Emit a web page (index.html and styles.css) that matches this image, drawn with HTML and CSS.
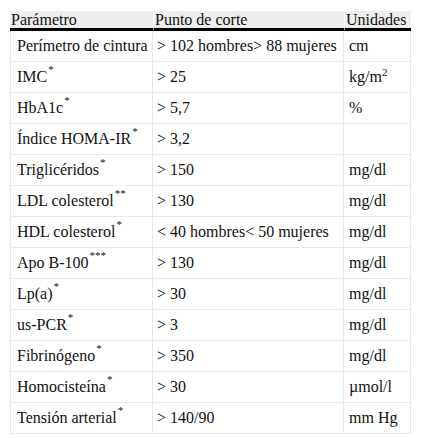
FILE: index.html
```html
<!DOCTYPE html>
<html lang="es">
<head>
<meta charset="utf-8">
<link rel="stylesheet" href="styles.css">
</head>
<body>
<table class="tbl">
  <colgroup>
    <col class="c1"><col class="c2"><col class="c3">
  </colgroup>
  <thead>
    <tr><th>Parámetro</th><th>Punto de corte</th><th>Unidades</th></tr>
  </thead>
  <tbody>
    <tr><td>Perímetro de cintura</td><td>&gt; 102 hombres&gt; 88 mujeres</td><td>cm</td></tr>
    <tr><td>IMC<sup class="ast">*</sup></td><td>&gt; 25</td><td>kg/m<sup class="pow">2</sup></td></tr>
    <tr><td>HbA1c<sup class="ast">*</sup></td><td>&gt; 5,7</td><td>%</td></tr>
    <tr><td>Índice HOMA-IR<sup class="ast">*</sup></td><td>&gt; 3,2</td><td></td></tr>
    <tr><td>Triglicéridos<sup class="ast">*</sup></td><td>&gt; 150</td><td>mg/dl</td></tr>
    <tr><td>LDL colesterol<sup class="ast">**</sup></td><td>&gt; 130</td><td>mg/dl</td></tr>
    <tr><td>HDL colesterol<sup class="ast">*</sup></td><td>&lt; 40 hombres&lt; 50 mujeres</td><td>mg/dl</td></tr>
    <tr><td>Apo B-100<sup class="ast">***</sup></td><td>&gt; 130</td><td>mg/dl</td></tr>
    <tr><td>Lp(a)<sup class="ast">*</sup></td><td>&gt; 30</td><td>mg/dl</td></tr>
    <tr><td>us-PCR<sup class="ast">*</sup></td><td>&gt; 3</td><td>mg/dl</td></tr>
    <tr><td>Fibrinógeno<sup class="ast">*</sup></td><td>&gt; 350</td><td>mg/dl</td></tr>
    <tr><td>Homocisteína<sup class="ast">*</sup></td><td>&gt; 30</td><td>µmol/l</td></tr>
    <tr><td>Tensión arterial<sup class="ast">*</sup></td><td>&gt; 140/90</td><td>mm Hg</td></tr>
  </tbody>
</table>
</body>
</html>
```

FILE: styles.css
```css
html, body {
  margin: 0;
  padding: 0;
  background: #fff;
}
body {
  padding: 11px 10px 0 10px;
  font-family: "Liberation Serif", "Times New Roman", serif;
  font-size: 16px;
  color: #111;
}
.tbl {
  border-collapse: separate;
  border-spacing: 0;
  width: 401px;
  table-layout: fixed;
}
.c1 { width: 143px; }
.c2 { width: 191px; }
.c3 { width: 67px; }
.tbl th {
  background: #eeeeee;
  font-weight: normal;
  text-align: left;
  height: 17px;
  line-height: 17px;
  padding: 0 0 0 1px;
  border-bottom: 3px solid #000;
  white-space: nowrap;
  vertical-align: middle;
}
.tbl th + th {
  border-left: 1px solid #fff;
}
.tbl td {
  height: 30px;
  padding: 0 0 0 6px;
  line-height: 18px;
  vertical-align: middle;
  border-right: 1px solid #e8e8e8;
  border-bottom: 1px solid #e8e8e8;
  white-space: nowrap;
}
.tbl td:first-child {
  border-left: 1px solid #e8e8e8;
  padding-left: 6px;
}
.tbl td:nth-child(2) {
  padding-left: 4px;
}
.tbl td:nth-child(3) {
  padding-left: 5px;
}
.ast {
  font-size: 11px;
  line-height: 0;
  vertical-align: 9px;
  margin-left: 1px;
}
.pow {
  font-size: 11px;
  line-height: 0;
  vertical-align: 6px;
}
```
